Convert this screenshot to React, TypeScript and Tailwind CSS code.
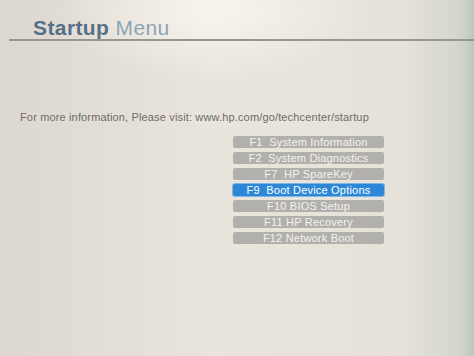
const items = [
  { label: "F1  System Information" },
  { label: "F2  System Diagnostics" },
  { label: "F7  HP SpareKey" },
  { label: "F9  Boot Device Options", active: true },
  { label: "F10 BIOS Setup" },
  { label: "F11 HP Recovery" },
  { label: "F12 Network Boot" },
];

// HP "Startup Menu" pre-boot screen, photographed off a monitor
export default function App() {
  return (
    <div className="relative h-[356px] w-[474px] overflow-hidden bg-[radial-gradient(ellipse_160px_70px_at_215px_10px,#f7f4ee,transparent),linear-gradient(90deg,#ddd8cf_0%,#e9e5dc_45%,#e6e2d9_85%,#d3d6cc_97%,#b9c8bb_100%)] font-['Liberation_Sans',Arial,sans-serif]">
      <div className="pl-[33px] pt-[17px]">
        <h1 className="text-[21px] leading-[21px] tracking-[0.4px]">
          <span className="font-bold text-[#566f88]">Startup</span>{" "}
          <span className="text-[#8ea3b6]">Menu</span>
        </h1>
      </div>
      <div className="ml-[9px] mt-[1px] h-[2px] bg-[#979792]" />

      <p className="mt-[70px] pl-[20px] text-[11px] leading-[13px] tracking-[0.15px] text-[#6e6c68]">
        For more information, Please visit: www.hp.com/go/techcenter/startup
      </p>

      <div className="ml-[233px] mt-[12px] flex w-[151px] flex-col gap-[4px]">
        {items.map((it) => (
          <div
            key={it.label}
            className={`flex h-[12px] items-center justify-center whitespace-pre rounded-[2px] text-[11px] leading-none tracking-[0.2px] ${
              it.active ? "bg-[#2c88d7] text-white shadow-[0_0_0_1px_#7fb6e4]" : "bg-[#b2b0ac] text-[#f4f3f0]"
            }`}
          >
            {it.label}
          </div>
        ))}
      </div>
    </div>
  );
}
